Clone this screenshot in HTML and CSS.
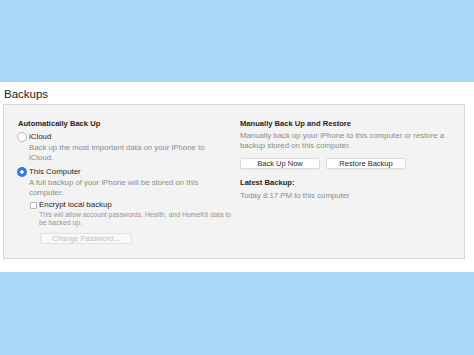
FILE: index.html
```html
<!DOCTYPE html>
<html lang="en">
<head>
    <meta charset="UTF-8">
    <meta name="viewport" content="width=device-width, initial-scale=1.0">
    <title>Backups</title>
    <link rel="stylesheet" href="styles.css">
</head>
<body>
    <div class="band"></div>

    <div class="sheet">
        <h2 class="title">Backups</h2>

        <div class="panel">
            <!-- left column: automatic backups -->
            <div class="col col-left">
                <div class="heading">Automatically Back Up</div>

                <label class="option opt-icloud">
                    <span class="radio"></span>
                    <span>iCloud</span>
                </label>
                <p class="desc">Back up the most important data on your iPhone to iCloud.</p>

                <label class="option opt-computer">
                    <span class="radio checked"></span>
                    <span>This Computer</span>
                </label>
                <p class="desc">A full backup of your iPhone will be stored on this computer.</p>

                <label class="option opt-encrypt">
                    <span class="check"></span>
                    <span>Encrypt local backup</span>
                </label>
                <p class="note">This will allow account passwords, Health, and HomeKit data to be backed up.</p>

                <button class="btn btn-disabled">Change Password...</button>
            </div>

            <!-- right column: manual backups -->
            <div class="col col-right">
                <div class="heading">Manually Back Up and Restore</div>
                <p class="desc desc-manual">Manually back up your iPhone to this computer or restore a backup stored on this computer.</p>

                <div class="btn-row">
                    <button class="btn">Back Up Now</button>
                    <button class="btn">Restore Backup</button>
                </div>

                <div class="heading latest">Latest Backup:</div>
                <p class="desc latest-info">Today 8:17 PM to this computer</p>
            </div>
        </div>
    </div>

    <div class="band band-bottom"></div>
</body>
</html>
```

FILE: styles.css
```css
html, body {
    height: 100%;
}
body {
    margin: 0;
    display: flex;
    flex-direction: column;
    font-family: "Liberation Sans", Arial, sans-serif;
    color: #2a2a2a;
    background: #a7d8f5;
}
.band {
    height: 82px;
    background: #a7d8f5;
}
.band-bottom {
    flex: 1;
    height: auto;
}
.sheet {
    height: 190px;
    background: #fff;
    padding: 0 0 0 3px;
    box-sizing: border-box;
}
.title {
    margin: 0;
    padding: 5px 0 0 1px;
    height: 22px;
    box-sizing: border-box;
    font-size: 11.5px;
    font-weight: normal;
    line-height: 14px;
    color: #222;
}
.panel {
    width: 462px;
    height: 155px;
    box-sizing: border-box;
    background: #f3f3f3;
    border: 1px solid #d6d6d6;
    display: grid;
    grid-template-columns: 222px 1fr;
    padding: 14px 0 0 14px;
}
.col {
    display: flex;
    flex-direction: column;
    align-items: flex-start;
}
.heading {
    font-size: 7.6px;
    font-weight: bold;
    line-height: 10px;
    color: #262626;
}
.option {
    display: flex;
    align-items: center;
    font-size: 7.9px;
    line-height: 10px;
    color: #262626;
}
.opt-icloud {
    margin-top: 3px;
    margin-left: -1px;
}
.opt-computer {
    margin-top: 5px;
    margin-left: -1px;
}
.opt-encrypt {
    margin-top: 3px;
    margin-left: 12px;
}
.radio {
    width: 10px;
    height: 10px;
    box-sizing: border-box;
    border-radius: 50%;
    border: 1px solid #bcbcbc;
    background: #fff;
    margin-right: 2px;
}
.radio.checked {
    border: none;
    background: radial-gradient(circle, #fff 0 1.5px, #2f7ae5 2px);
}
.check {
    width: 7px;
    height: 7px;
    box-sizing: border-box;
    border: 1px solid #b9b9b9;
    border-radius: 1px;
    background: #fff;
    margin-right: 2px;
}
.desc {
    margin: 1px 0 0 11px;
    width: 180px;
    font-size: 7.8px;
    line-height: 9.5px;
    color: #8c8c8c;
}
.note {
    margin: 1px 0 0 21px;
    width: 196px;
    font-size: 6.85px;
    line-height: 8px;
    color: #969696;
}
.btn {
    height: 11px;
    padding: 0;
    font-family: inherit;
    font-size: 7.5px;
    line-height: 9px;
    color: #2a2a2a;
    background: #fff;
    border: 1px solid #dcdcdc;
    border-radius: 2px;
    box-shadow: 0 0.5px 0.5px rgba(0,0,0,0.08);
}
.btn-disabled {
    margin: 6px 0 0 22px;
    width: 92px;
    color: #bdbdbd;
    background: #f9f9f9;
    border-color: #e2e2e2;
    box-shadow: none;
}
.desc-manual {
    margin: 2px 0 0;
    line-height: 10px;
    width: 212px;
}
.btn-row {
    display: flex;
    gap: 6px;
    margin-top: 7px;
}
.btn-row .btn {
    width: 80px;
}
.latest {
    margin-top: 9px;
}
.latest-info {
    margin: 3px 0 0;
    line-height: 10px;
}
```
